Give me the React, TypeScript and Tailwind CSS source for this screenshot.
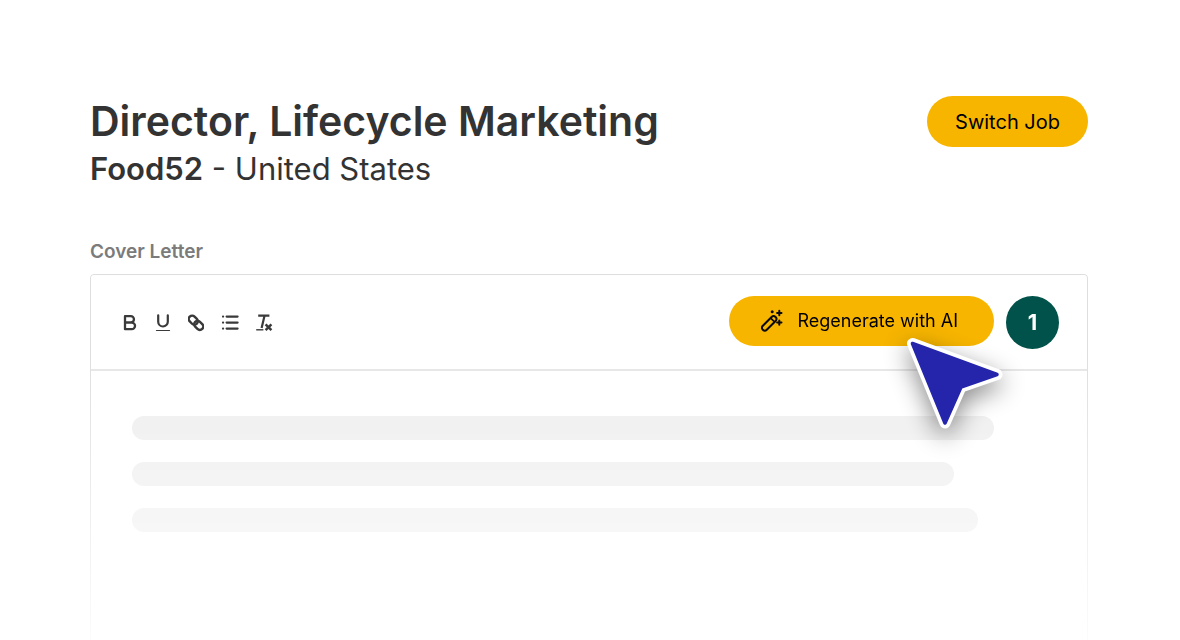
import React from "react";

const lines = ["w-full", "w-[95.4%]", "w-[98.1%]"];

function BoldIcon() {
  return (
    <svg className="w-4 h-5" viewBox="0 0 16 20" fill="none" stroke="#3a3a3a" strokeWidth="2.3" strokeLinejoin="round">
      <path d="M3 3.2h5.8a3.1 3.1 0 0 1 0 6.3H3zM3 9.5h6.7a3.3 3.3 0 0 1 0 6.7H3z" />
    </svg>
  );
}

function UnderlineIcon() {
  return (
    <svg className="w-4 h-5" viewBox="0 0 16 20" fill="none" stroke="#3a3a3a" strokeLinecap="round">
      <path d="M3.2 2.3v6.4a4.8 4.8 0 0 0 9.6 0V2.3" strokeWidth="2.2" />
      <path d="M1.5 17.5h13" strokeWidth="1.2" />
    </svg>
  );
}

function LinkIcon() {
  return (
    <svg className="w-4 h-5" viewBox="0 0 16 20" fill="none" stroke="#3a3a3a" strokeWidth="2.4">
      <rect x="-5" y="-3.4" width="10" height="6.8" rx="3.4" transform="translate(5.3 7.2) rotate(45)" />
      <rect x="-5" y="-3.4" width="10" height="6.8" rx="3.4" transform="translate(10.7 12.4) rotate(45)" />
    </svg>
  );
}

function ListIcon() {
  return (
    <svg className="w-[18px] h-5" viewBox="0 0 18 20" fill="none" stroke="#3a3a3a" strokeWidth="2.2" strokeLinecap="round">
      <path d="M5.6 3.6h11M5.6 9.6h11M5.6 15.6h11M2 3.6h.1M2 9.6h.1M2 15.6h.1" />
    </svg>
  );
}

function ClearIcon() {
  return (
    <svg className="w-[18px] h-5" viewBox="0 0 18 20" fill="none" stroke="#3a3a3a">
      <path d="M2.2 2.6h11.2M8.6 2.6 5.6 15" strokeWidth="2.2" />
      <path d="M.2 16.8h7.2" strokeWidth="1.4" />
      <path d="m9.6 11.4 5.8 5.8M15.4 11.4l-5.8 5.8" strokeWidth="2.5" />
    </svg>
  );
}

function WandIcon() {
  return (
    <svg className="w-6 h-6" viewBox="0 0 24 24" fill="none" stroke="#0a0a0a" strokeWidth="2" strokeLinecap="round">
      <rect x="-9" y="-2.8" width="18" height="5.6" rx="2.8" transform="translate(8.2 14.4) rotate(-45)" />
      <path d="m10.2 9.6 2.8 2.8" strokeWidth="1.6" />
      <path d="M18.3 1.8v4.4M16.1 4h4.4M18.3 11.4v4.4M16.1 13.6h4.4" />
      <circle cx="11.2" cy="2.8" r="1.5" fill="#0a0a0a" stroke="none" />
    </svg>
  );
}

function Cursor() {
  return (
    <svg
      className="absolute top-14 right-[78px] w-[110px] h-[110px] overflow-visible pointer-events-none drop-shadow-[0_8px_12px_rgba(0,0,0,0.45)]"
      viewBox="0 0 110 110"
      strokeLinejoin="round"
    >
      <path d="M12.5 13.5 97 44.5 61 57 45 93z" fill="#fff" stroke="#fff" strokeWidth="11" />
      <path d="M12.5 13.5 97 44.5 61 57 45 93z" fill="#2525ac" stroke="#2525ac" strokeWidth="3.6" />
    </svg>
  );
}

const tools = [
  { label: "Bold", icon: <BoldIcon /> },
  { label: "Underline", icon: <UnderlineIcon /> },
  { label: "Link", icon: <LinkIcon /> },
  { label: "Bullet list", icon: <ListIcon /> },
  { label: "Clear formatting", icon: <ClearIcon /> },
];

export default function App() {
  return (
    <main className="bg-white pt-24 pl-[90px] pr-[92px] font-['Inter',sans-serif] text-[#333]">
      <header className="flex items-start justify-between">
        <div>
          <h1 className="text-[41px] leading-[50px] font-semibold">Director, Lifecycle Marketing</h1>
          <p className="text-[31px] leading-[46px]">
            <span className="font-semibold">Food52</span> - United States
          </p>
        </div>
        <button className="rounded-full bg-[#f7b500] px-7 h-[51px] text-xl text-black cursor-pointer">
          Switch Job
        </button>
      </header>

      <section className="mt-[46px]">
        <h2 className="text-[19px] leading-7 font-semibold text-[#7b7b7b]">Cover Letter</h2>
        <div className="relative mt-2">
          <div className="rounded-t border border-b-0 border-[#dedede] mask-[linear-gradient(to_bottom,#000_80px,transparent_400px)]">
            <div className="flex items-center justify-between border-b-2 border-[#e6e6e6] pl-[31px] pr-7 pt-[21px] pb-5">
              <div className="flex items-center gap-[17px]">
                {tools.map((tool) => (
                  <button key={tool.label} aria-label={tool.label} className="cursor-pointer">
                    {tool.icon}
                  </button>
                ))}
              </div>
              <div className="flex items-start gap-3">
                <button className="flex items-center gap-3 rounded-full bg-[#f7b500] h-[50px] pl-8 pr-9 text-lg text-black cursor-pointer">
                  <WandIcon />
                  Regenerate with AI
                </button>
                <span className="flex items-center justify-center size-[53px] rounded-full bg-[#00524a] text-[22px] font-bold text-white">
                  1
                </span>
              </div>
            </div>
            <div className="flex flex-col gap-[22px] pt-[45px] pl-[41px] pr-[93px] h-[269px]">
              {lines.map((width) => (
                <div key={width} className={`h-6 rounded-full bg-[#ededed] ${width}`} />
              ))}
            </div>
          </div>
          <Cursor />
        </div>
      </section>
    </main>
  );
}
